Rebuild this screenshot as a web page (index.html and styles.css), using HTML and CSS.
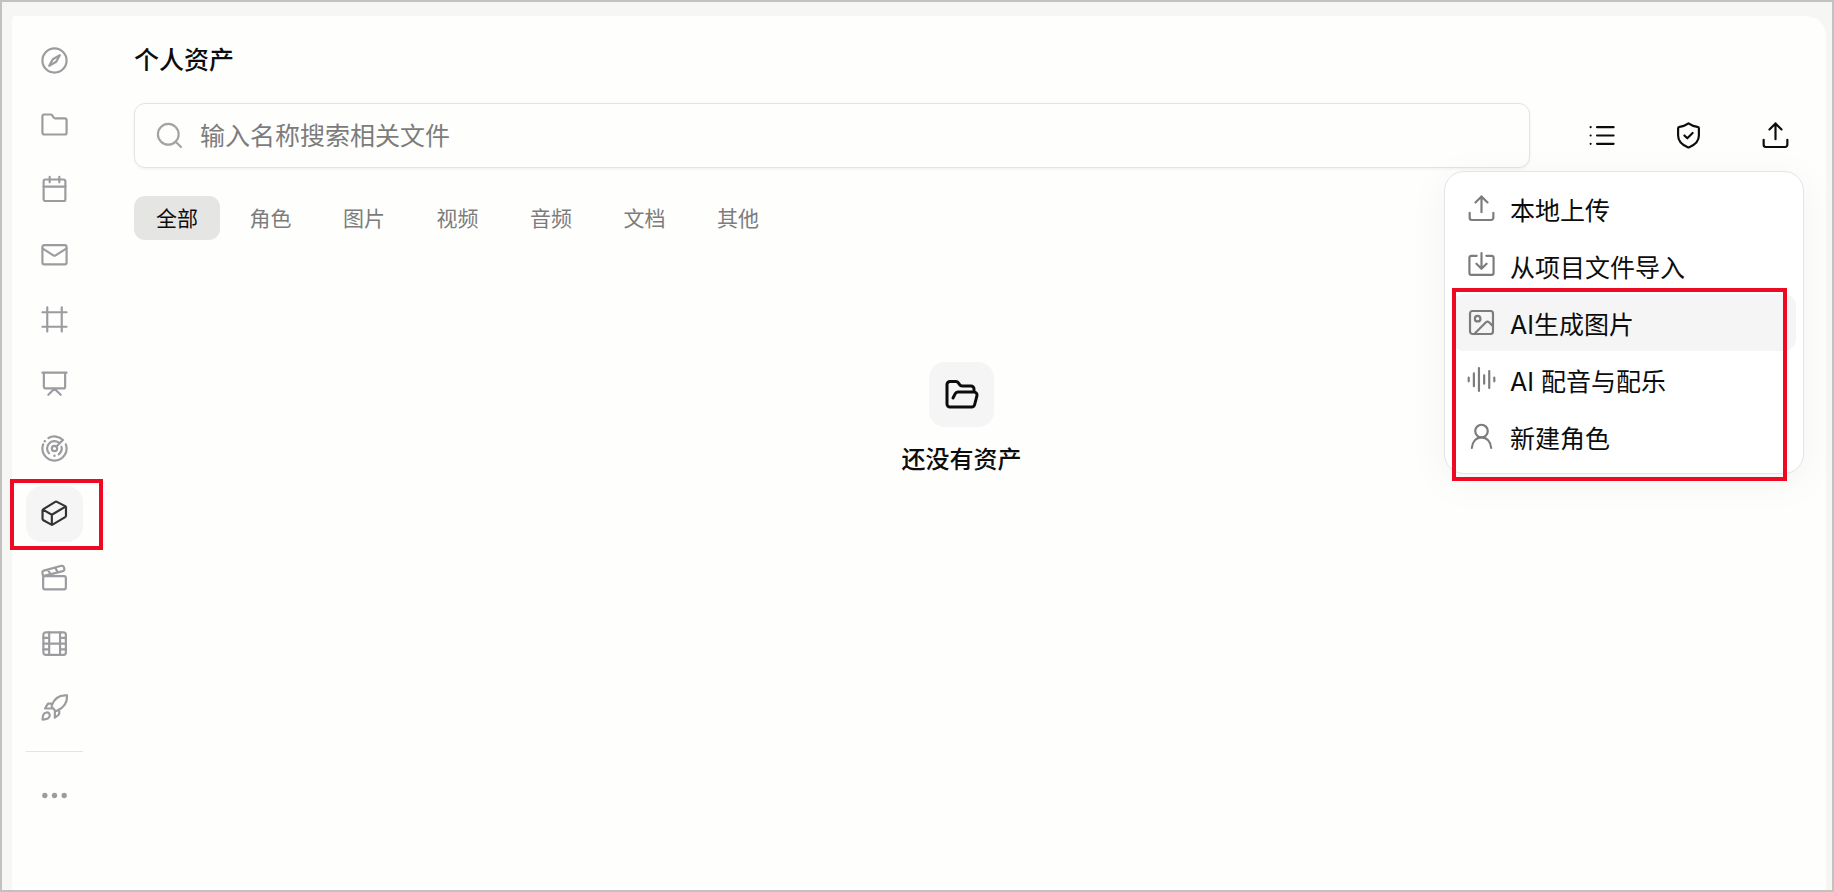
FILE: index.html
```html
<!DOCTYPE html>
<html lang="zh-CN">

<head>
    <meta charset="UTF-8">
    <meta name="viewport" content="width=device-width, initial-scale=1.0">
    <title>个人资产</title>
    <link rel="stylesheet" href="styles.css">
</head>

<body>
    <div class="panel">
        <nav class="sidebar">
            <div class="nav-list">
                <button type="button" class="nav-item" aria-label="compass">
                    <svg class="icon" viewBox="0 0 24 24"><circle cx="12" cy="12" r="10"/><path d="M16.4 7.6 13.4 13l-5.8 3.4 3-5.4z"/></svg>
                </button>
                <button type="button" class="nav-item" aria-label="folder">
                    <svg class="icon" viewBox="0 0 24 24"><path d="M2 5.2A1.5 1.5 0 0 1 3.5 3.7h5.4c.5 0 .9.3 1.2.7l1.3 1.9c.3.4.7.6 1.2.6h7.9A1.5 1.5 0 0 1 22 8.4v10.4a1.5 1.5 0 0 1-1.5 1.5h-17A1.5 1.5 0 0 1 2 18.8z"/></svg>
                </button>
                <button type="button" class="nav-item" aria-label="calendar">
                    <svg class="icon" viewBox="0 0 24 24"><rect x="3" y="3.7" width="18" height="17.8" rx="1.5"/><path d="M8 1.5v4.6M16 1.5v4.6M3 9.6h18"/></svg>
                </button>
                <button type="button" class="nav-item" aria-label="mail">
                    <svg class="icon" viewBox="0 0 24 24"><rect x="2" y="4.2" width="20" height="16" rx="1.5"/><path d="m2.3 7.2 9.1 5.7c.4.2.8.2 1.2 0l9.1-5.7"/></svg>
                </button>
                <button type="button" class="nav-item" aria-label="frame">
                    <svg class="icon" viewBox="0 0 24 24"><path d="M6 2v20M18 2v20M2 6h20M2 18h20"/></svg>
                </button>
                <button type="button" class="nav-item" aria-label="presentation">
                    <svg class="icon" viewBox="0 0 24 24"><path d="M2 3h20M3.2 3v11.6a1.5 1.5 0 0 0 1.5 1.5h14.6a1.5 1.5 0 0 0 1.5-1.5V3M6.9 21.3l5.1-5 5.1 5"/></svg>
                </button>
                <button type="button" class="nav-item" aria-label="radar">
                    <svg class="icon" viewBox="0 0 24 24"><circle cx="12" cy="12" r="2.2"/><path d="M13.6 10.4 19 5a10 10 0 0 0-12-1.7M21.4 8.6A10 10 0 1 1 2.6 8.6M15.6 7.2A6 6 0 0 0 7.4 15.9M17.8 10.7a6 6 0 0 1-2.3 6.1"/><circle class="dot" cx="4" cy="5.9" r="1"/><circle class="dot" cx="12" cy="18" r="1"/></svg>
                </button>
                <button type="button" class="nav-item active" aria-label="资产">
                    <svg class="icon" viewBox="0 0 24 24"><path d="M12.6 2.4a1.5 1.5 0 0 1 1.4 0l6.9 3.5c.4.2.6.5.6.9v7.1c0 .5-.3.9-.7 1.1l-10.4 6.2a1 1 0 0 1-1 0l-6.6-3.6a1.3 1.3 0 0 1-.7-1.1V9.4c0-.4.3-.8.7-1zM2.4 8.8l7.4 4.2 11.3-6.7M9.8 13v8"/></svg>
                    <span class="mark mark-nav"></span>
                </button>
                <button type="button" class="nav-item" aria-label="clapperboard">
                    <svg class="icon" viewBox="0 0 24 24"><rect x="2.6" y="10" width="18.8" height="11" rx="1.5"/><path d="M2.6 10 2 7.6c-.3-1 .3-1.9 1.2-2.1l14.5-4c1-.2 1.8.3 2.1 1.2l.3 1.2c.3.9-.3 1.8-1.2 2L2.6 10M6.5 4.7l2 3.4M12.5 3l2 3.4"/></svg>
                </button>
                <button type="button" class="nav-item" aria-label="film">
                    <svg class="icon" viewBox="0 0 24 24"><rect x="2.8" y="2.8" width="18.6" height="18.6" rx="2"/><path d="M7.6 2.8v18.6M16.6 2.8v18.6M2.8 12.1h18.6M2.8 7.4h4.8M2.8 16.8h4.8M16.6 7.4h4.8M16.6 16.8h4.8"/></svg>
                </button>
                <button type="button" class="nav-item" aria-label="rocket">
                    <svg class="icon" viewBox="0 0 24 24"><path d="M22.4 2c-6.2-.6-10.5 2-12.7 8.4-.2.5-.1 1 .3 1.4l2.5 2.6c.4.4.9.5 1.4.3C19.7 12.4 22.7 8.3 22.4 2zM10.4 8.8H7.3c-.6 0-1 .3-1.3.8l-1.8 3.2h5.7M15.9 13.7v3.2c0 .5-.3 1-.7 1.3l-2.9 2.3v-6M2.2 22c-.2-3.3.8-5.6 3.2-5.9 1.9-.2 3 1.2 2.6 2.9C7.5 21 5.3 21.9 2.2 22z"/></svg>
                </button>
            </div>
            <hr class="nav-divider">
            <button type="button" class="nav-item" aria-label="更多">
                <svg class="icon" viewBox="0 0 24 24"><circle class="dot" cx="4" cy="12" r="2.2"/><circle class="dot" cx="12" cy="12" r="2.2"/><circle class="dot" cx="20" cy="12" r="2.2"/></svg>
            </button>
        </nav>

        <main class="main">
            <h1 class="title">个人资产</h1>

            <div class="toolbar">
                <label class="search">
                    <svg class="icon" viewBox="0 0 24 24"><circle cx="11" cy="11" r="8.6"/><path d="m17.3 17.3 4.2 4.2"/></svg>
                    <input type="text" placeholder="输入名称搜索相关文件" aria-label="搜索">
                </label>
                <div class="actions">
                    <button type="button" class="action" aria-label="列表">
                        <svg class="icon" viewBox="0 0 24 24"><path d="M8.3 5.1H22M8.3 12H22M8.3 18.9H22M3 5.1h.01M3 12h.01M3 18.9h.01"/></svg>
                    </button>
                    <button type="button" class="action" aria-label="安全">
                        <svg class="icon" viewBox="0 0 24 24"><path d="M11.3 2.3c.4-.3 1-.3 1.4 0 1.8 1.3 4 2.2 6.6 2.5.7.1 1.300.6 1.300 1.300v6c0 4.700-2.900 7.600-8 9.600-.4.2-.8.2-1.2 0-5.1-2-8-4.900-8-9.600v-6c0-.7.6-1.200 1.300-1.300 2.600-.3 4.800-1.200 6.600-2.500zM8.6 12l2.400 2.300 4.400-4.400"/></svg>
                    </button>
                    <button type="button" class="action" id="upload-btn" aria-label="上传" aria-expanded="true">
                        <svg class="icon" viewBox="0 0 24 24"><path d="M12 15V2M7 7l5-5 5 5M2.2 15.5v4.2A1.8 1.8 0 0 0 4 21.5h16a1.8 1.8 0 0 0 1.8-1.8v-4.2"/></svg>
                    </button>
                </div>

                <div class="menu" id="upload-menu">
                    <button type="button" class="menu-item">
                        <svg class="icon" viewBox="0 0 24 24"><path d="M12 15V2M7 7l5-5 5 5M2.2 15.5v4.2A1.8 1.8 0 0 0 4 21.5h16a1.8 1.8 0 0 0 1.8-1.8v-4.2"/></svg>
                        本地上传
                    </button>
                    <button type="button" class="menu-item">
                        <svg class="icon" viewBox="0 0 24 24"><path d="M12 1.8v12.4M7.8 10.5l4.2 4.2 4.2-4.2M8 4H3.5A1.5 1.5 0 0 0 2 5.5v12.7a1.5 1.5 0 0 0 1.5 1.5h17a1.5 1.5 0 0 0 1.5-1.5V5.500A1.5 1.5 0 0 0 20.5 4H16"/></svg>
                        从项目文件导入
                    </button>
                    <button type="button" class="menu-item selected">
                        <svg class="icon" viewBox="0 0 24 24"><rect x="2.500" y="2.5" width="19" height="19" rx="2"/><circle cx="8.8" cy="8.8" r="2.3"/><path d="m6 21.5 9.7-9.7a1.8 1.8 0 0 1 2.5 0l3.3 3.200"/></svg>
                        AI生成图片
                    </button>
                    <button type="button" class="menu-item">
                        <svg class="icon" viewBox="0 0 24 24"><path d="M1.400 10.500v3M5.700 7v10.500M9.900 2.500v19M14.200 8.500v7M18.400 5v14M22.600 10.500v3"/></svg>
                        AI 配音与配乐
                    </button>
                    <button type="button" class="menu-item">
                        <svg class="icon" viewBox="0 0 24 24"><circle cx="12" cy="7.5" r="5.2"/><path d="M4 21.5c.3-5 3.5-8.800 8-8.800s7.700 3.800 8 8.800"/></svg>
                        新建角色
                    </button>
                    <span class="mark mark-menu"></span>
                </div>
            </div>

            <div class="tabs">
                <button type="button" class="tab active">全部</button>
                <button type="button" class="tab">角色</button>
                <button type="button" class="tab">图片</button>
                <button type="button" class="tab">视频</button>
                <button type="button" class="tab">音频</button>
                <button type="button" class="tab">文档</button>
                <button type="button" class="tab">其他</button>
            </div>

            <div class="empty">
                <div class="empty-icon">
                    <svg class="icon" viewBox="0 0 24 24"><path d="m6 14 1.5-2.9A2 2 0 0 1 9.24 10H20a2 2 0 0 1 1.94 2.5l-1.54 6a2 2 0 0 1-1.95 1.5H4a2 2 0 0 1-2-2V5a2 2 0 0 1 2-2h3.900a2 2 0 0 1 1.690.9l.81 1.200a2 2 0 0 0 1.670.9H18a2 2 0 0 1 2 2v2"/></svg>
                </div>
                <p class="empty-text">还没有资产</p>
            </div>
        </main>
    </div>

    <script>
        const uploadBtn = document.querySelector('#upload-btn');
        const uploadMenu = document.querySelector('#upload-menu');
        uploadBtn.addEventListener('click', () => {
            uploadMenu.hidden = !uploadMenu.hidden;
            uploadBtn.setAttribute('aria-expanded', !uploadMenu.hidden);
        })

        const tabs = document.querySelectorAll('.tab');
        tabs.forEach((tab) => {
            tab.addEventListener('click', () => {
                document.querySelector('.tab.active').classList.remove('active');
                tab.classList.add('active');
            })
        })
    </script>
</body>

</html>
```
FILE: styles.css
```css
* {
    box-sizing: border-box;
}

body {
    margin: 0;
    padding: 14px 6px 0 10px;
    display: flex;
    min-height: 100vh;
    border: 2px solid #c1c1bf;
    background-color: #f6f6f4;
    color: #0c0c0c;
    font-family: Inter, "Noto Sans CJK SC", sans-serif;
}

button,
input {
    font-family: inherit;
    color: inherit;
}

button {
    padding: 0;
    border: none;
    background: none;
    cursor: pointer;
}

.panel {
    flex: 1;
    display: flex;
    background-color: #fefefd;
    border-radius: 4px 20px 0 0;
}

.icon {
    display: block;
    flex-shrink: 0;
    width: 29px;
    height: 29px;
    fill: none;
    stroke: currentColor;
    stroke-width: 1.8;
    stroke-linecap: round;
    stroke-linejoin: round;
}

.dot {
    fill: currentColor;
    stroke: none;
}

/* sidebar */
.sidebar {
    width: 85px;
    padding-top: 16px;
    display: flex;
    flex-direction: column;
    align-items: center;
    color: #9c9ca0;
}

.nav-list {
    height: 704px;
    display: flex;
    flex-direction: column;
    justify-content: space-between;
}

.nav-item {
    position: relative;
    width: 57px;
    height: 56px;
    display: flex;
    align-items: center;
    justify-content: center;
    border-radius: 16px;
}

.nav-item.active {
    background-color: #f5f5f6;
    color: #333336;
}

.nav-divider {
    width: 57px;
    margin: 15px 0;
    border: none;
    border-top: 1px solid #e4e4e4;
}

/* red highlight frames */
.mark {
    position: absolute;
    border: 4px solid #ee0a22;
    pointer-events: none;
}

.mark-nav {
    top: -7px;
    right: -20px;
    bottom: -8px;
    left: -16px;
}

.mark-menu {
    top: 116px;
    right: 16px;
    bottom: -8px;
    left: 7px;
}

/* content */
.main {
    flex: 1;
}

.title {
    margin: 0;
    padding: 26px 37px 0;
    font-size: 25px;
    line-height: 36px;
    font-weight: 500;
}

.toolbar {
    position: relative;
    margin: 25px 22px 0 37px;
    display: flex;
    align-items: center;
    gap: 43px;
}

.search {
    flex: 1;
    height: 65px;
    padding: 0 20px;
    display: flex;
    align-items: center;
    gap: 16px;
    border: 1px solid #e4e4e4;
    border-radius: 11px;
    box-shadow: 0 1px 3px rgba(0, 0, 0, 0.06);
    color: #a3a3a3;
}

.search input {
    flex: 1;
    padding: 0;
    border: none;
    outline: none;
    background: none;
    color: #0c0c0c;
    font-size: 25px;
    font-weight: 400;
}

.search input::placeholder {
    color: #7c7c7c;
    opacity: 1;
}

.actions {
    display: flex;
    gap: 30px;
}

.action {
    width: 57px;
    height: 57px;
    display: flex;
    align-items: center;
    justify-content: center;
}

.menu {
    position: absolute;
    top: 68px;
    right: 0;
    z-index: 1;
    width: 360px;
    padding: 8px 7px;
    border: 1px solid #e4e4e4;
    border-radius: 20px;
    background-color: #fff;
    box-shadow: 0 8px 40px rgba(0, 0, 0, 0.05);
}

.menu-item {
    width: 100%;
    height: 57px;
    padding: 0 15px;
    display: flex;
    align-items: center;
    gap: 14px;
    border-radius: 12px;
    font-size: 25px;
    font-weight: 400;
}

.menu-item.selected {
    background-color: #f5f5f5;
}

.menu-item .icon {
    color: #7c7c7a;
}

.tabs {
    width: 647px;
    margin: 28px 37px 0;
    display: flex;
    justify-content: space-between;
}

.tab {
    height: 44px;
    padding: 0 22px 2px;
    border-radius: 11px;
    color: #7c7c7c;
    font-size: 21px;
    font-weight: 400;
}

.tab.active {
    background-color: #e5e5e4;
    color: #0c0c0c;
}

.empty {
    padding-top: 122px;
    display: flex;
    flex-direction: column;
    align-items: center;
    gap: 15px;
}

.empty-icon {
    width: 65px;
    height: 65px;
    display: flex;
    align-items: center;
    justify-content: center;
    border-radius: 16px;
    background-color: #f5f5f5;
}

.empty-icon .icon {
    width: 36px;
    height: 36px;
    stroke-width: 2;
}

.empty-text {
    margin: 0;
    font-size: 24px;
    line-height: 36px;
    font-weight: 500;
}
```
